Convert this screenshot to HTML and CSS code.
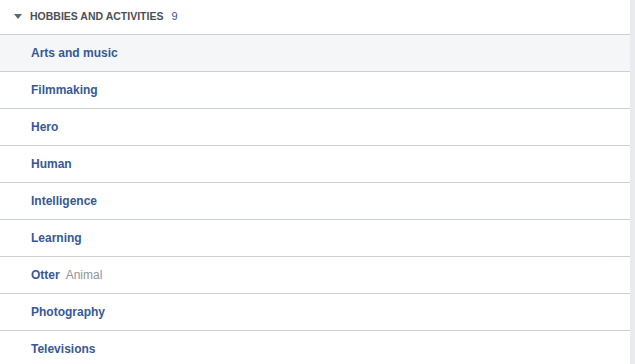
FILE: index.html
```html
<html>
  <head>
    <title>hobbies and activities</title>
    <link rel="stylesheet" href="styles.css">
  </head>
  <body>
    <div id="panel">
      <div class="head">
        <span class="caret"></span>
        <span class="title">Hobbies and activities</span>
        <span class="count">9</span>
      </div>
      <ul class="items">
        <li class="hover"><a>Arts and music</a></li>
        <li><a>Filmmaking</a></li>
        <li><a>Hero</a></li>
        <li><a>Human</a></li>
        <li><a>Intelligence</a></li>
        <li><a>Learning</a></li>
        <li><a>Otter</a><span class="sub">Animal</span></li>
        <li><a>Photography</a></li>
        <li><a>Televisions</a></li>
      </ul>
    </div>
  </body>
</html>
```

FILE: styles.css
```css
* {
  box-sizing: border-box;
  margin: 0;
  padding: 0;
}
body {
  background: #e9ebee;
  font-family: "Liberation Sans", Arial, sans-serif;
  font-size: 12px;
  overflow: hidden;
}
#panel {
  width: 630px;
  background: #fff;
  min-height: 364px;
}
.head {
  display: flex;
  align-items: center;
  height: 35px;
  padding-left: 14px;
  padding-bottom: 2px;
  border-bottom: 1px solid #cccfd4;
}
.caret {
  width: 0;
  height: 0;
  border-left: 4px solid transparent;
  border-right: 4px solid transparent;
  border-top: 5px solid #606770;
  margin-right: 8px;
  margin-top: 1px;
}
.title {
  font-size: 10.5px;
  font-weight: bold;
  text-transform: uppercase;
  color: #4b4f56;
}
.count {
  font-size: 11px;
  color: #365899;
  margin-left: 8px;
}
.items {
  list-style: none;
}
.items li {
  display: flex;
  align-items: center;
  height: 37px;
  padding-left: 31px;
  border-bottom: 1px solid #cccfd4;
}
.items li.hover {
  background: #f5f6f7;
}
.items a {
  font-weight: bold;
  color: #365899;
}
.sub {
  color: #90949c;
  margin-left: 6px;
}
```
